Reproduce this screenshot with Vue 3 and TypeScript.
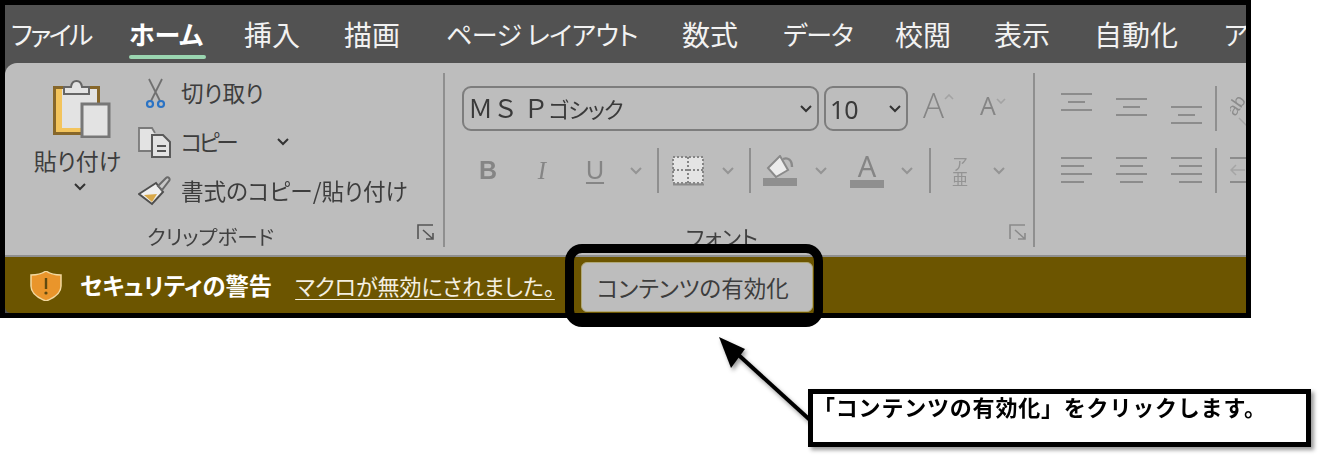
<script setup lang="ts">
interface Tab { label: string; kind: string }
const tabs: Tab[] = [
  { label: 'ファイル', kind: 'kana tight' },
  { label: 'ホーム', kind: 'kana active' },
  { label: '挿入', kind: 'kanji' },
  { label: '描画', kind: 'kanji' },
  { label: 'ページ レイアウト', kind: 'kana page' },
  { label: '数式', kind: 'kanji' },
  { label: 'データ', kind: 'kana data' },
  { label: '校閲', kind: 'kanji' },
  { label: '表示', kind: 'kanji' },
  { label: '自動化', kind: 'kanji' },
  { label: 'アドイン', kind: 'kana' }
]
const alignTop: number[] = [0, 1, 2]
</script>

<template>
  <div class="stage">
    <div class="frame">
      <nav class="tabs">
        <span v-for="t in tabs" :key="t.label" class="tab" :class="t.kind">{{ t.label }}</span>
      </nav>

      <section class="ribbon">
        <div class="group clip-group">
          <div class="clip-body">
            <div class="paste">
              <svg class="paste-icon" width="58" height="58" viewBox="0 0 58 58">
                <rect x="1.5" y="7.5" width="44" height="46" fill="#e3e3e3" stroke="#87672a" stroke-width="3" />
                <path d="M3 9h6v43H3zM3 48h41v4H3z" fill="#f3c45c" />
                <path d="M11 14V7h7c1-8 10-8 11 0h7v7z" fill="#e3e3e3" stroke="#666" stroke-width="2" />
                <rect x="29" y="24" width="27" height="33" fill="#e3e3e3" stroke="#777" stroke-width="3" />
              </svg>
              <span class="paste-label">貼り付け</span>
              <svg class="chev dark paste-chev" viewBox="0 0 14 8"><path d="M2 1l5 5 5-5" /></svg>
            </div>
            <div class="cmds">
              <div class="cmd">
                <svg class="cmd-icon" width="34" height="32" viewBox="0 0 34 32">
                  <path d="M13 24L24 2M22 24L11 2" stroke="#707070" stroke-width="1.8" fill="none" />
                  <circle cx="12" cy="27" r="3" fill="none" stroke="#2b73c4" stroke-width="2.2" />
                  <circle cx="23" cy="27" r="3" fill="none" stroke="#2b73c4" stroke-width="2.2" />
                </svg>
                <span>切り取り</span>
              </div>
              <div class="cmd">
                <svg class="cmd-icon" width="34" height="32" viewBox="0 0 34 32">
                  <path d="M13 25H1V2h13l3 5" fill="#e3e3e3" stroke="#7a7a7a" stroke-width="1.8" />
                  <path d="M14 9h11l7 7v15H14z" fill="#e3e3e3" stroke="#5a5a5a" stroke-width="2" />
                  <path d="M19 20h9M19 25h9" stroke="#555" stroke-width="2" />
                </svg>
                <span class="copy-text">コピー</span>
                <svg class="chev dark copy-chev" viewBox="0 0 14 8"><path d="M2 1l5 5 5-5" /></svg>
              </div>
              <div class="cmd">
                <svg class="cmd-icon" width="34" height="32" viewBox="0 0 34 32">
                  <path d="M1 19L18 8l7 9-11 12z" fill="#efefef" stroke="#4f4f4f" stroke-width="2" />
                  <path d="M6 20l13-1-5 8z" fill="#d9a94a" />
                  <path d="M20 11l8-8c2-2 5 1 3 3l-7 9z" fill="#c8c8c8" stroke="#6a6a6a" stroke-width="2" />
                </svg>
                <span>書式のコピー/貼り付け</span>
              </div>
            </div>
          </div>
          <div class="group-foot clip-foot">
            <span class="group-label">クリップボード</span>
            <svg class="launcher" width="18" height="16" viewBox="0 0 18 16">
              <path d="M1 15V1h15M6 6l10 9M16 9v6h-7" fill="none" stroke="#555" stroke-width="1.6" />
            </svg>
          </div>
        </div>
        <i class="group-sep"></i>

        <div class="group font-group">
          <div class="font-row1">
            <div class="combo name-combo">
              <span class="combo-text"><span class="msp">ＭＳ Ｐ</span><span class="goth">ゴシック</span></span>
              <svg class="chev dark" viewBox="0 0 14 8"><path d="M2 1l5 5 5-5" /></svg>
            </div>
            <div class="combo size-combo">
              <span class="combo-size">10</span>
              <svg class="chev dark" viewBox="0 0 14 8"><path d="M2 1l5 5 5-5" /></svg>
            </div>
            <div class="grow big">
              <span>A</span>
              <svg width="10" height="6" viewBox="0 0 10 6"><path d="M1 5l4-4 4 4" fill="none" stroke="#a3a3a3" stroke-width="1.6" /></svg>
            </div>
            <div class="grow small">
              <span>A</span>
              <svg width="10" height="6" viewBox="0 0 10 6"><path d="M1 1l4 4 4-4" fill="none" stroke="#a3a3a3" stroke-width="1.6" /></svg>
            </div>
          </div>
          <div class="font-row2">
            <span class="fmt bold">B</span>
            <span class="fmt italic">I</span>
            <span class="fmt under">U</span>
            <svg class="chev" viewBox="0 0 14 8"><path d="M2 1l5 5 5-5" /></svg>
            <i class="vsep"></i>
            <svg width="33" height="30" viewBox="0 0 33 30">
              <rect x="1" y="1" width="30" height="26" fill="#e4e4e4" />
              <path d="M1 1h30v26H1zM16 1v26M1 14h30" fill="none" stroke="#858585" stroke-width="2" stroke-dasharray="2 2" />
              <path d="M1 28.5h31" stroke="#8a8a8a" stroke-width="2" />
            </svg>
            <svg class="chev" viewBox="0 0 14 8"><path d="M2 1l5 5 5-5" /></svg>
            <i class="vsep"></i>
            <svg width="34" height="31" viewBox="0 0 34 31">
              <path d="M5 13L17 1l8 14-12 7z" fill="#ececec" stroke="#8a8a8a" stroke-width="2" />
              <path d="M20 4c5-2 9 1 9 8" fill="none" stroke="#8a8a8a" stroke-width="2.4" />
              <rect x="0" y="23" width="34" height="8" fill="#8f8f8f" />
            </svg>
            <svg class="chev" viewBox="0 0 14 8"><path d="M2 1l5 5 5-5" /></svg>
            <span class="color-a"><span>A</span><i></i></span>
            <svg class="chev" viewBox="0 0 14 8"><path d="M2 1l5 5 5-5" /></svg>
            <i class="vsep"></i>
            <span class="ruby"><span>ア</span><span>亜</span></span>
            <svg class="chev" viewBox="0 0 14 8"><path d="M2 1l5 5 5-5" /></svg>
          </div>
          <div class="group-foot font-foot">
            <span class="group-label font-label">フォント</span>
            <svg class="launcher" width="18" height="16" viewBox="0 0 18 16">
              <path d="M1 15V1h15M6 6l10 9M16 9v6h-7" fill="none" stroke="#8a8a8a" stroke-width="1.6" />
            </svg>
          </div>
        </div>
        <i class="group-sep"></i>

        <div class="group align-group">
          <div class="align-row first">
            <svg v-for="n in alignTop" :key="n" class="al" :class="'v' + n" width="31" height="18" viewBox="0 0 31 18">
              <path d="M0 1h31M7 9h17M0 17h31" stroke="#8c8c8c" stroke-width="2" />
            </svg>
            <i class="vsep"></i>
            <svg class="clipped" width="30" height="40" viewBox="0 0 30 40">
              <text transform="translate(5 26) rotate(-55)" font-size="18" fill="#8c8c8c" font-family="Liberation Sans, sans-serif">ab</text>
              <path d="M9 27l8 8" stroke="#a5a5a5" stroke-width="1.5" />
            </svg>
          </div>
          <div class="align-row second">
            <svg width="31" height="26" viewBox="0 0 31 26"><path d="M0 1h31M0 9h23M0 17h31M0 25h23" stroke="#8c8c8c" stroke-width="2" /></svg>
            <svg width="31" height="26" viewBox="0 0 31 26"><path d="M0 1h31M4 9h23M0 17h31M4 25h23" stroke="#8c8c8c" stroke-width="2" /></svg>
            <svg width="31" height="26" viewBox="0 0 31 26"><path d="M0 1h31M8 9h23M0 17h31M8 25h23" stroke="#8c8c8c" stroke-width="2" /></svg>
            <i class="vsep"></i>
            <svg class="clipped" width="30" height="26" viewBox="0 0 30 26">
              <path d="M0 1h30M0 25h30" stroke="#8c8c8c" stroke-width="2" />
              <path d="M1 13h14M6 8l-5 5 5 5" fill="none" stroke="#a5a5a5" stroke-width="1.5" />
            </svg>
          </div>
        </div>
      </section>

      <footer class="warn">
        <svg class="shield" width="32" height="30" viewBox="0 0 32 30">
          <path d="M16 0c4 3 9 4 15 4v11c0 7-7 12-15 15C8 27 1 22 1 15V4c6 0 11-1 15-4z" fill="#e9952b" stroke="#f2d9a0" stroke-width="1.5" />
          <path d="M16 7v11" stroke="#5f4a10" stroke-width="2.4" />
          <circle cx="16" cy="22" r="1.6" fill="#5f4a10" />
        </svg>
        <strong class="warn-title">セキュリティの警告</strong>
        <span class="warn-link">マクロが無効にされました。</span>
        <button class="warn-btn" type="button">コンテンツの有効化</button>
      </footer>
    </div>

    <div class="highlight"></div>
    <svg class="arrow" width="1324" height="460" viewBox="0 0 1324 460">
      <path d="M732 349L810 420" stroke="#000" stroke-width="4" />
      <path d="M719 337L745 349 731 368z" fill="#000" />
    </svg>
    <div class="callout"><span class="callout-text">「コンテンツの有効化」をクリックします。</span></div>
  </div>
</template>

<style>
html, body { margin: 0; background: #fff; }
</style>

<style scoped>
.stage {
  position: relative;
  width: 1324px;
  height: 460px;
  overflow: hidden;
  background: #fff;
  font-family: "Noto Sans CJK JP", "Noto Sans", sans-serif;
  font-feature-settings: "palt";
}
.frame {
  box-sizing: border-box;
  width: 1251px;
  height: 318px;
  border: 5px solid #000;
  background: #525252;
  display: flex;
  flex-direction: column;
  overflow: hidden;
}
.tabs {
  flex: none;
  height: 58px;
  display: grid;
  grid-template-columns: 118px 115px 100px 102px 236px 101px 112px 99px 100px 130px 100px;
  padding-left: 6px;
  white-space: nowrap;
  overflow: hidden;
}
.tab {
  position: relative;
  color: #f2f2f2;
  line-height: 58px;
  height: 58px;
}
.tab.kana { font-size: 26px; }
.tab.kanji { font-size: 28px; }
.tab.tight { letter-spacing: -2.6px; }
.tab.page { letter-spacing: -0.5px; }
.tab.data { letter-spacing: -1px; }
.tab.active { font-weight: 700; color: #fff; }
.tab.active::after {
  content: "";
  position: absolute;
  left: 0;
  width: 77px;
  top: 50px;
  height: 4px;
  border-radius: 2px;
  background: #9bd6b1;
}
.ribbon {
  flex: none;
  box-sizing: border-box;
  height: 194px;
  display: flex;
  background: #bdbdbd;
  border-radius: 12px 0 0 0;
  border-bottom: 2px solid #8f8f8f;
  color: #3d3d3d;
  filter: blur(0.3px);
}
.group { flex: none; display: flex; flex-direction: column; }
.group-sep { flex: none; width: 2px; height: 174px; margin-top: 10px; background: #8f8f8f; }
.clip-group { width: 438px; }
.clip-body { display: flex; height: 154px; }
.paste {
  width: 85px;
  margin-left: 30px;
  display: flex;
  flex-direction: column;
  align-items: center;
  padding-top: 17px;
}
.paste-icon { margin-left: 8px; flex: none; }
.paste-label { font-size: 23px; line-height: 30px; margin-top: 7px; white-space: nowrap; }
.paste-chev { margin-top: 8px; margin-left: 4px; }
.cmds { margin-left: 18px; padding-top: 5px; }
.cmd {
  display: flex;
  align-items: center;
  height: 49px;
  font-size: 22.6px;
  white-space: nowrap;
}
.cmd-icon { flex: none; margin-right: 9px; }
.copy-text { letter-spacing: -3.6px; }
.copy-chev { margin-left: 41px; }
.chev { width: 14px; height: 8px; flex: none; }
.chev path { fill: none; stroke: #949494; stroke-width: 2; }
.chev.dark path { stroke: #333; }
.group-foot { display: flex; align-items: center; height: 38px; }
.group-label { font-size: 20.6px; white-space: nowrap; color: #404040; }
.font-label { font-size: 22px; }
.clip-foot { padding-left: 142px; }
.clip-foot .launcher { margin-left: auto; margin-right: 8px; margin-top: -9px; }
.font-group { width: 588px; padding-left: 17px; box-sizing: border-box; }
.font-row1 { display: flex; margin-top: 23px; height: 45px; }
.combo {
  box-sizing: border-box;
  height: 45px;
  border: 2px solid #7d7d7d;
  border-radius: 9px;
  display: flex;
  align-items: center;
  justify-content: space-between;
  padding: 0 4px 0 4px;
  color: #3a3a3a;
}
.name-combo { width: 357px; }
.size-combo { width: 84px; margin-left: 5px; }
.combo-text { white-space: nowrap; line-height: 1; font-size: 22px; font-feature-settings: normal; margin-top: -2px; }
.msp { font-size: 25px; }
.goth { font-feature-settings: "palt"; letter-spacing: -1px; }
.combo-size { font-family: "Noto Sans", sans-serif; font-size: 25px; }
.grow { display: flex; align-items: flex-start; color: #858585; font-family: "Open Sans", sans-serif; line-height: 1; }
.grow.big { margin-left: 15px; font-size: 35px; width: 57px; padding-top: 1px; font-weight: 300; }
.grow.small { font-size: 25px; padding-top: 7px; font-weight: 400; }
.grow.big svg { margin-top: 7px; }
.grow.small svg { margin-top: 5px; }
.font-row2 {
  display: grid;
  grid-template-columns: 52px 56px 50px 32px 12px 48px 32px 12px 48px 34px 58px 22px 24px 36px 42px;
  justify-items: center;
  align-items: center;
  height: 45px;
  margin-top: 17px;
}
.vsep { display: block; width: 2px; height: 45px; background: #8f8f8f; }
.fmt { font-family: "Liberation Sans", sans-serif; font-size: 25px; color: #858585; line-height: 1; }
.fmt.bold { font-weight: 700; }
.fmt.italic { font-family: "Liberation Serif", serif; font-style: italic; }
.fmt.under { text-decoration: underline; text-underline-offset: 3px; padding: 0 1px; }
.color-a {
  display: flex;
  flex-direction: column;
  align-items: center;
  width: 34px;
  color: #858585;
  font-family: "Noto Sans", sans-serif;
  font-size: 29px;
  line-height: 25px;
}
.color-a i { display: block; width: 34px; height: 8px; background: #8f8f8f; margin-top: 2px; }
.ruby {
  display: flex;
  flex-direction: column;
  align-items: center;
  color: #939393;
  font-size: 16px;
  line-height: 15px;
}
.font-foot { margin-top: 24px; padding-left: 224px; }
.font-foot .launcher { margin-left: auto; margin-right: 6px; margin-top: -9px; }
.align-group { padding-left: 26px; }
.align-row { display: flex; height: 45px; align-items: flex-start; }
.align-row.first { margin-top: 23px; }
.align-row.second { margin-top: 17px; }
.al { margin-right: 24px; }
.al.v0 { margin-top: 7px; }
.al.v1 { margin-top: 12px; }
.al.v2 { margin-top: 20px; margin-right: 0; }
.align-row .vsep { margin-left: 13px; }
.clipped { margin-left: 13px; margin-top: 5px; }
.align-row.second svg:not(.clipped) { margin-top: 9px; margin-right: 24px; }
.align-row.second svg:nth-child(3) { margin-right: 0; }
.align-row.second .clipped { margin-top: 9px; }
.warn {
  flex: 1;
  display: flex;
  align-items: center;
  background: #6c5500;
  border-radius: 0 0 0 6px;
  color: #fff;
  white-space: nowrap;
}
.shield { margin-left: 25px; flex: none; margin-top: 2px; }
.warn-title { margin-left: 18px; font-size: 23.3px; font-weight: 700; }
.warn-link {
  margin-left: 23px;
  font-size: 22px;
  color: #f4efe0;
  text-decoration: underline;
  text-underline-offset: 4px;
  text-decoration-thickness: 1px;
}
.warn-btn {
  margin-left: 26px;
  margin-top: 4px;
  box-sizing: border-box;
  width: 232px;
  height: 50px;
  border: 1px solid #b0a878;
  border-radius: 6px;
  background: #bdbdbd;
  color: #3d3d3d;
  font: inherit;
  font-size: 22.5px;
  padding: 0 8px 0 0;
}
.highlight {
  position: absolute;
  left: 565px;
  top: 244px;
  width: 258px;
  height: 83px;
  box-sizing: border-box;
  border: 9px solid #000;
  border-radius: 17px;
}
.arrow {
  position: absolute;
  left: 0;
  top: 0;
  filter: drop-shadow(2px 3px 2px rgba(0, 0, 0, 0.4));
}
.callout {
  position: absolute;
  left: 808px;
  top: 389px;
  width: 503px;
  height: 58px;
  box-sizing: border-box;
  border: 5px solid #000;
  background: #fff;
  box-shadow: 3px 3px 4px rgba(0, 0, 0, 0.4);
  color: #000;
  font-size: 22px;
  font-weight: 700;
  font-feature-settings: normal;
  line-height: 25px;
  letter-spacing: 0.8px;
  white-space: nowrap;
}
.callout-text { display: block; }
</style>
